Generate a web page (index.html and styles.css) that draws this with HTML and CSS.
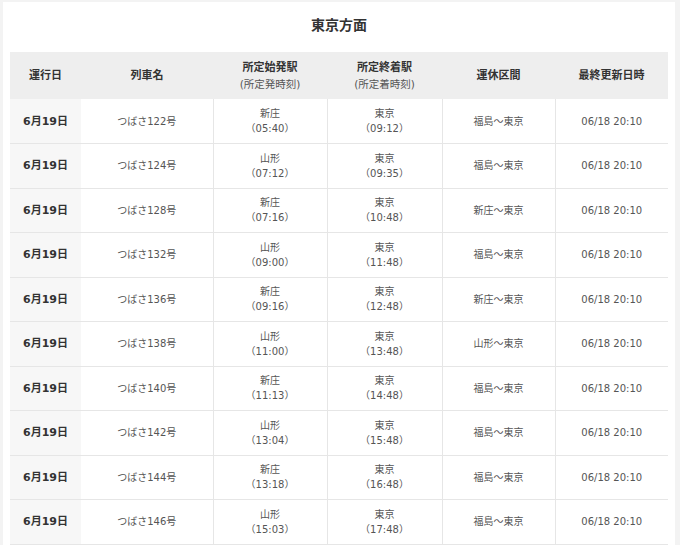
FILE: index.html
```html
<!DOCTYPE html>
<html lang="ja">
<head>
<meta charset="utf-8">
<link rel="stylesheet" href="styles.css">
</head>
<body>
<div class="card">
  <h2 class="title">東京方面</h2>
  <table class="tbl">
    <colgroup>
      <col class="c1"><col class="c2"><col class="c3"><col class="c4"><col class="c5"><col class="c6">
    </colgroup>
    <thead>
      <tr>
        <th>運行日</th>
        <th>列車名</th>
        <th>所定始発駅<span class="sub">(所定発時刻)</span></th>
        <th>所定終着駅<span class="sub">(所定着時刻)</span></th>
        <th>運休区間</th>
        <th>最終更新日時</th>
      </tr>
    </thead>
    <tbody>
      <tr><th>6月19日</th><td>つばさ122号</td><td>新庄<br>（05:40）</td><td>東京<br>（09:12）</td><td>福島～東京</td><td>06/18 20:10</td></tr>
      <tr><th>6月19日</th><td>つばさ124号</td><td>山形<br>（07:12）</td><td>東京<br>（09:35）</td><td>福島～東京</td><td>06/18 20:10</td></tr>
      <tr><th>6月19日</th><td>つばさ128号</td><td>新庄<br>（07:16）</td><td>東京<br>（10:48）</td><td>新庄～東京</td><td>06/18 20:10</td></tr>
      <tr><th>6月19日</th><td>つばさ132号</td><td>山形<br>（09:00）</td><td>東京<br>（11:48）</td><td>福島～東京</td><td>06/18 20:10</td></tr>
      <tr><th>6月19日</th><td>つばさ136号</td><td>新庄<br>（09:16）</td><td>東京<br>（12:48）</td><td>新庄～東京</td><td>06/18 20:10</td></tr>
      <tr><th>6月19日</th><td>つばさ138号</td><td>山形<br>（11:00）</td><td>東京<br>（13:48）</td><td>山形～東京</td><td>06/18 20:10</td></tr>
      <tr><th>6月19日</th><td>つばさ140号</td><td>新庄<br>（11:13）</td><td>東京<br>（14:48）</td><td>福島～東京</td><td>06/18 20:10</td></tr>
      <tr><th>6月19日</th><td>つばさ142号</td><td>山形<br>（13:04）</td><td>東京<br>（15:48）</td><td>福島～東京</td><td>06/18 20:10</td></tr>
      <tr><th>6月19日</th><td>つばさ144号</td><td>新庄<br>（13:18）</td><td>東京<br>（16:48）</td><td>福島～東京</td><td>06/18 20:10</td></tr>
      <tr><th>6月19日</th><td>つばさ146号</td><td>山形<br>（15:03）</td><td>東京<br>（17:48）</td><td>福島～東京</td><td>06/18 20:10</td></tr>
    </tbody>
  </table>
</div>
</body>
</html>
```
FILE: styles.css
```css
html, body {
  margin: 0;
  padding: 0;
}
body {
  background: #f3f3f3;
  font-family: "DejaVu Sans", "Noto Sans CJK JP", sans-serif;
  color: #555;
}
.card {
  background: #fff;
  margin: 2px 5px 0 3px;
  padding: 0 7px 20px 7px;
}
.title {
  margin: 0;
  height: 50px;
  line-height: 46px;
  text-align: center;
  font-size: 14px;
  font-weight: bold;
  color: #333;
}
.tbl {
  width: 658px;
  border-collapse: collapse;
  table-layout: fixed;
}
.c1 { width: 71px; }
.c2 { width: 132px; }
.c3 { width: 114px; }
.c4 { width: 115px; }
.c5 { width: 113px; }
.c6 { width: 113px; }
.tbl thead th {
  background: #eeeeee;
  height: 47px;
  padding: 0;
  font-size: 11px;
  font-weight: bold;
  color: #333;
  line-height: 17px;
  text-align: center;
  vertical-align: middle;
}
.sub {
  display: block;
  font-size: 10.5px;
  font-weight: normal;
  color: #555;
}
.tbl tbody tr {
  height: 44.5px;
}
.tbl tbody th,
.tbl tbody td {
  padding: 0;
  border-bottom: 1px solid #e6e6e6;
  text-align: center;
  vertical-align: middle;
  font-size: 10px;
  line-height: 15px;
}
.tbl tbody td {
  border-left: 1px solid #e6e6e6;
}
.tbl tbody td:nth-child(2) {
  border-left: none;
}
.tbl tbody th {
  background: #f7f7f7;
  font-size: 11px;
  font-weight: bold;
  color: #333;
}
```
